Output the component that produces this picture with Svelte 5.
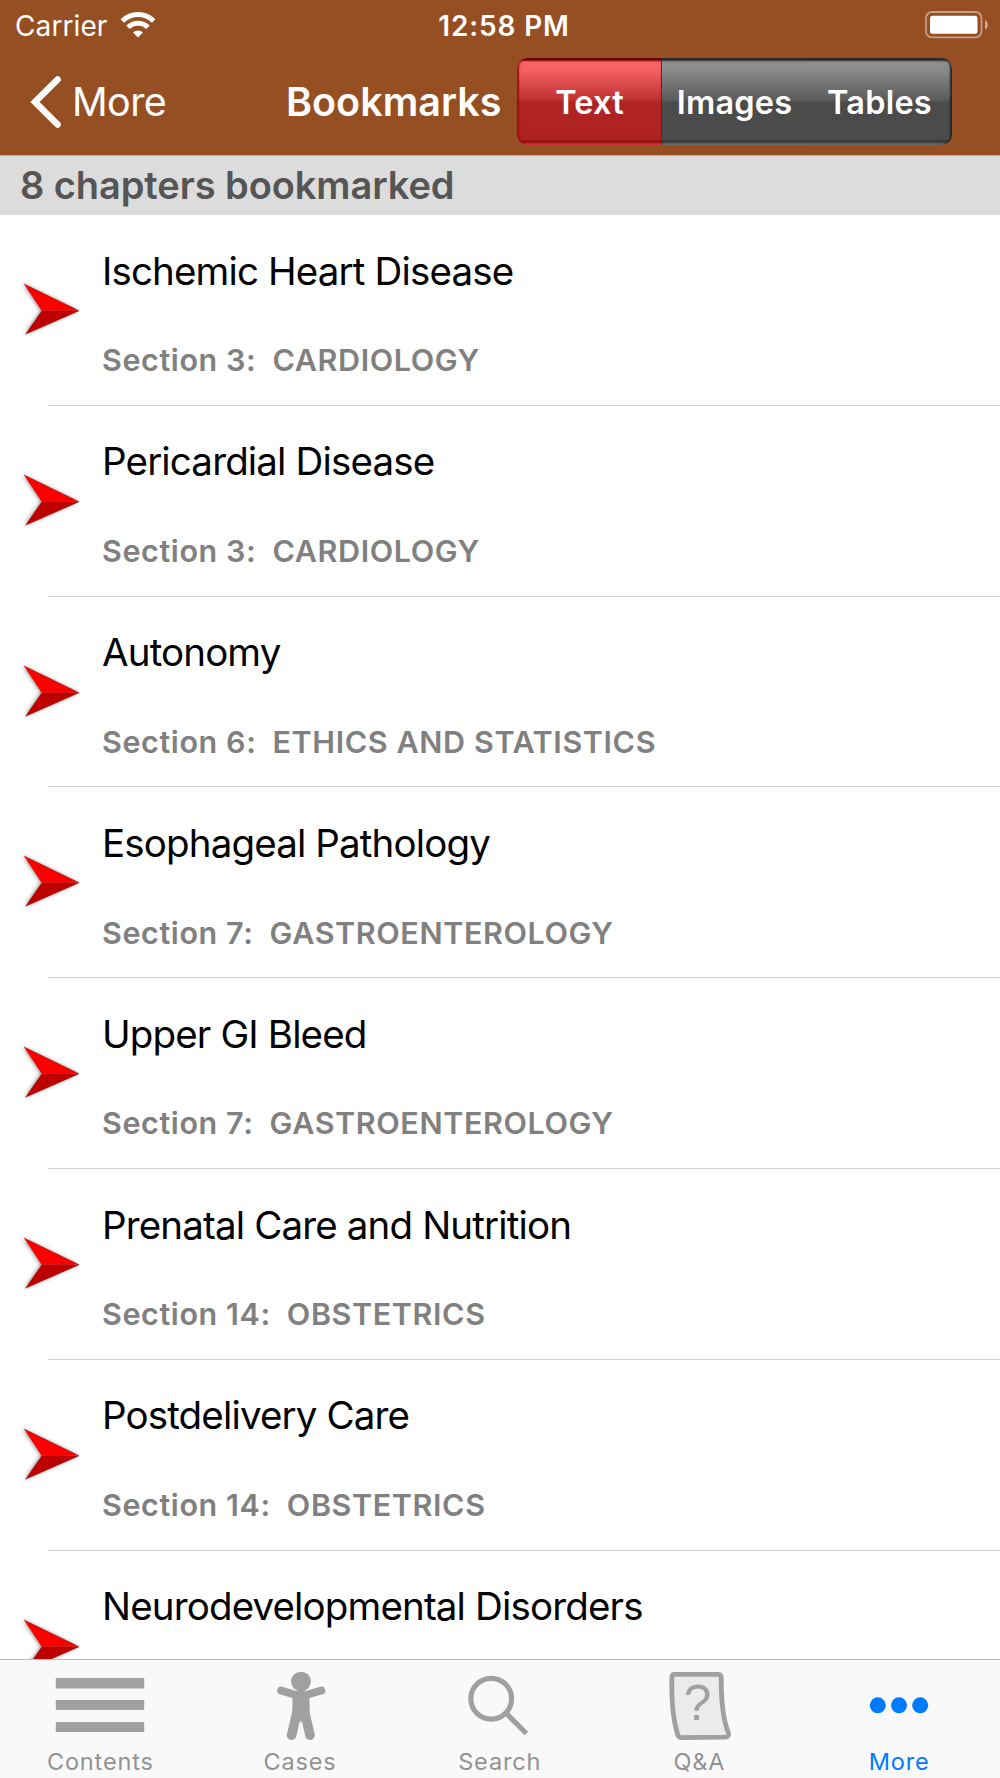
<script>
  const segments = ['Text', 'Images', 'Tables'];
  let selected = $state('Text');

  const bookmarks = [
    { title: 'Ischemic Heart Disease', section: 3, name: 'CARDIOLOGY' },
    { title: 'Pericardial Disease', section: 3, name: 'CARDIOLOGY' },
    { title: 'Autonomy', section: 6, name: 'ETHICS AND STATISTICS' },
    { title: 'Esophageal Pathology', section: 7, name: 'GASTROENTEROLOGY' },
    { title: 'Upper GI Bleed', section: 7, name: 'GASTROENTEROLOGY' },
    { title: 'Prenatal Care and Nutrition', section: 14, name: 'OBSTETRICS' },
    { title: 'Postdelivery Care', section: 14, name: 'OBSTETRICS' },
    { title: 'Neurodevelopmental Disorders' }
  ];

  const tabs = ['Contents', 'Cases', 'Search', 'Q&A', 'More'];
</script>

<div class="screen">
  <header>
    <div class="status">
      <div class="carrier">
        <span>Carrier</span>
        <svg class="wifi" width="36" height="26" viewBox="0 0 36 26">
          <g fill="none" stroke="#fff" stroke-width="5">
            <path d="M2.3 9a22.5 22.5 0 0 1 31.4 0" />
            <path d="M8 15.2a14.4 14.4 0 0 1 20 0" />
          </g>
          <path d="M18 25.4l-5-5a7.2 7.2 0 0 1 10 0z" fill="#fff" />
        </svg>
      </div>
      <div class="time">12:58 PM</div>
      <div class="battery">
        <svg width="64" height="28" viewBox="0 0 64 28">
          <rect x="1" y="1" width="55.5" height="25.4" rx="6" fill="none" stroke="#fff" stroke-opacity=".45" stroke-width="1.8" />
          <rect x="5" y="4.8" width="47.5" height="18" rx="2.6" fill="#fff" />
          <path d="M60 9.2q2.8 1.4 2.8 4.7t-2.8 4.7z" fill="#fff" fill-opacity=".5" />
        </svg>
      </div>
    </div>
    <nav>
      <div class="back">
        <svg width="32" height="54" viewBox="0 0 32 54">
          <path d="M27.6 4.5L5 27l22.6 22.5" fill="none" stroke="#fff" stroke-width="6.6" stroke-linecap="round" stroke-linejoin="miter" />
        </svg>
        <span>More</span>
      </div>
      <h1>Bookmarks</h1>
      <div class="segmented">
        {#each segments as label}
          <button class:active={selected === label} onclick={() => (selected = label)}>{label}</button>
        {/each}
      </div>
    </nav>
  </header>

  <h2>8 chapters bookmarked</h2>

  <main>
    {#each bookmarks as item}
      <article>
        <svg class="arrow" width="70" height="64" viewBox="0 0 70 64">
          <path class="shadow" d="M7 7l18 26.7L9 57l53-23.3z" />
          <path d="M7 7l55 26.7H24.7z" fill="#fc0000" />
          <path d="M24.7 33.7H62L8.3 57.3z" fill="#bd0000" />
          <path d="M7 7l55 26.7L8.3 57.3" fill="none" stroke="#700" stroke-opacity=".45" stroke-width="1" />
        </svg>
        <div class="copy">
          <h3>{item.title}</h3>
          {#if item.section}
            <p><span>Section {item.section}:</span><span>{item.name}</span></p>
          {/if}
        </div>
      </article>
    {/each}
  </main>

  <footer>
    {#each tabs as tab}
      <div class="tab" class:current={tab === 'More'}>
        <svg width="100" height="80" viewBox="0 0 100 80">
          {#if tab === 'Contents'}
            <path d="M5.8 14h88.4v10.5H5.8zM5.8 36h88.4v10H5.8zM5.8 58h88.4v10H5.8z" />
          {:else if tab === 'Cases'}
            <circle cx="51" cy="17.6" r="9.9" />
            <g fill="none" stroke="currentColor" stroke-linecap="round">
              <path d="M31 26.5L46 31M71.4 26.5L56 31" stroke-width="7.8" />
              <path d="M47 48L41.6 71.2M54.6 48L60 71.2" stroke-width="9.6" />
            </g>
            <path d="M42 27h18q-1 2-.6 5l.4 21-6.2 0-2.6 6-2.6-6-6.2 0 .4-21q.4-3-.6-5z" />
          {:else if tab === 'Search'}
            <g fill="none" stroke="currentColor" stroke-width="5.2">
              <circle cx="42.2" cy="34.7" r="20.4" />
              <path d="M56.8 48.8l20.6 20.7" />
            </g>
          {:else if tab === 'Q&A'}
            <path class="page" d="M25.5 10.4H69q3.2 0 3.2 3.2-.2 37 7.2 55.4 1 4-3.4 4.2l-43.5.4q-3 0-3.8-3Q22 49 22.9 13q.2-2.6 2.6-2.6z" />
            <text x="48.4" y="56.2" text-anchor="middle">?</text>
          {:else}
            <circle cx="28.8" cy="41.3" r="8" />
            <circle cx="50" cy="41.3" r="8" />
            <circle cx="71.2" cy="41.3" r="8" />
          {/if}
        </svg>
        <span>{tab}</span>
      </div>
    {/each}
  </footer>
</div>

<style>
  :global(body) {
    margin: 0;
    background: #fff;
  }
  * {
    box-sizing: border-box;
  }
  .screen {
    width: 1000px;
    height: 1778px;
    display: flex;
    flex-direction: column;
    overflow: hidden;
    background: #fff;
    font-family: Inter, 'Liberation Sans', sans-serif;
  }
  h1, h2, h3, p {
    margin: 0;
  }
  svg {
    display: block;
    flex: none;
  }
  header {
    height: 156px;
    flex: none;
    background: #964f22;
    border-bottom: 1px solid #b9aaa0;
    color: #fff;
  }
  .status {
    height: 50px;
    display: grid;
    grid-template-columns: 1fr auto 1fr;
    align-items: center;
    padding: 1px 11px 0 15px;
    font-size: 28px;
    line-height: 50px;
  }
  .carrier {
    display: flex;
    align-items: center;
    gap: 13px;
    letter-spacing: 0.1px;
  }
  .wifi {
    margin-top: -2px;
  }
  .time {
    font-weight: 600;
    letter-spacing: 0.85px;
    padding-left: 4px;
  }
  .battery {
    display: flex;
    justify-content: flex-end;
    margin-top: -2px;
  }
  nav {
    height: 105px;
    display: flex;
    align-items: center;
    padding: 0 48px 0 30px;
  }
  .back {
    width: 256px;
    display: flex;
    align-items: center;
    gap: 10px;
    margin-top: -1px;
    font-size: 39.5px;
    letter-spacing: -0.6px;
  }
  h1 {
    width: 231px;
    margin-top: -1px;
    font-size: 39.5px;
    font-weight: 600;
    letter-spacing: 0;
  }
  .segmented {
    width: 435px;
    height: 87px;
    display: grid;
    grid-template-columns: repeat(3, 1fr);
    border-radius: 10px;
    overflow: hidden;
    margin-top: -2px;
  }
  button {
    border: 0;
    padding: 1px 0 0;
    color: #fff;
    font: 600 32.5px Inter, 'Liberation Sans', sans-serif;
    letter-spacing: 0.2px;
    background: linear-gradient(#2c2a2a 0 2px, #8f8f8f 4px, #8a8a8a 12px, #5b5b5b 42px, #4b4b4b 44px, #4b4b4b 81px, #343434 84px, #6a6a6a 86px);
  }
  button:last-child {
    border-radius: 0 10px 10px 0;
    box-shadow: inset -3px 0 2px -1px #252525;
  }
  button.active {
    border-radius: 10px 0 0 10px;
    background: linear-gradient(#6a0000 0 2px, #f86464 4px, #f36262 12px, #bf3030 42px, #af2424 44px, #af2222 81px, #8e0a0a 84px, #cb3a3a 86px);
    box-shadow: inset 3px 0 2px -1px #a00c0c, inset -2px 0 1px -1px #960808;
  }
  h2 {
    height: 59px;
    flex: none;
    padding-left: 20px;
    background: #dcdcdc;
    color: #555;
    font-size: 38px;
    line-height: 58px;
    font-weight: 600;
    letter-spacing: -0.08px;
  }
  main {
    height: 1444px;
    flex: none;
    overflow: hidden;
  }
  article {
    height: 190.8px;
    display: flex;
    padding-left: 17px;
    background: linear-gradient(#d0d0d0, #d0d0d0) 48px 100% / 952px 1px no-repeat;
  }
  .arrow {
    margin-top: 62px;
  }
  .shadow {
    filter: blur(2px);
    fill: #000;
    opacity: 0.5;
    transform: translateX(-1px);
  }
  .copy {
    padding: 31.7px 0 0 15px;
    white-space: nowrap;
  }
  h3 {
    font-size: 38.5px;
    line-height: 48px;
    font-weight: 400;
    color: #000;
    letter-spacing: -0.85px;
  }
  p {
    display: flex;
    gap: 16px;
    margin-top: 45.5px;
    font-size: 30.5px;
    line-height: 40px;
    font-weight: 600;
    letter-spacing: 0.6px;
    color: #808080;
  }
  footer {
    flex: 1;
    display: grid;
    grid-template-columns: repeat(5, 199.7px);
    border-top: 1px solid #bdbdbd;
    background: #f9f9f9;
  }
  .tab {
    display: flex;
    flex-direction: column;
    align-items: center;
    padding-top: 4px;
    color: #929292;
    font-size: 23.5px;
    line-height: 36px;
    letter-spacing: 0.85px;
  }
  .tab span {
    padding-left: 1px;
  }
  .tab svg {
    color: #a0a0a0;
    fill: currentColor;
  }
  .tab.current,
  .tab.current svg {
    color: #007aff;
  }
  .page {
    fill: #ebebeb;
    stroke: #a0a0a0;
    stroke-width: 4.8px;
  }
  text {
    font-family: 'Liberation Sans', sans-serif;
    font-size: 50px;
    letter-spacing: 0;
  }
</style>
